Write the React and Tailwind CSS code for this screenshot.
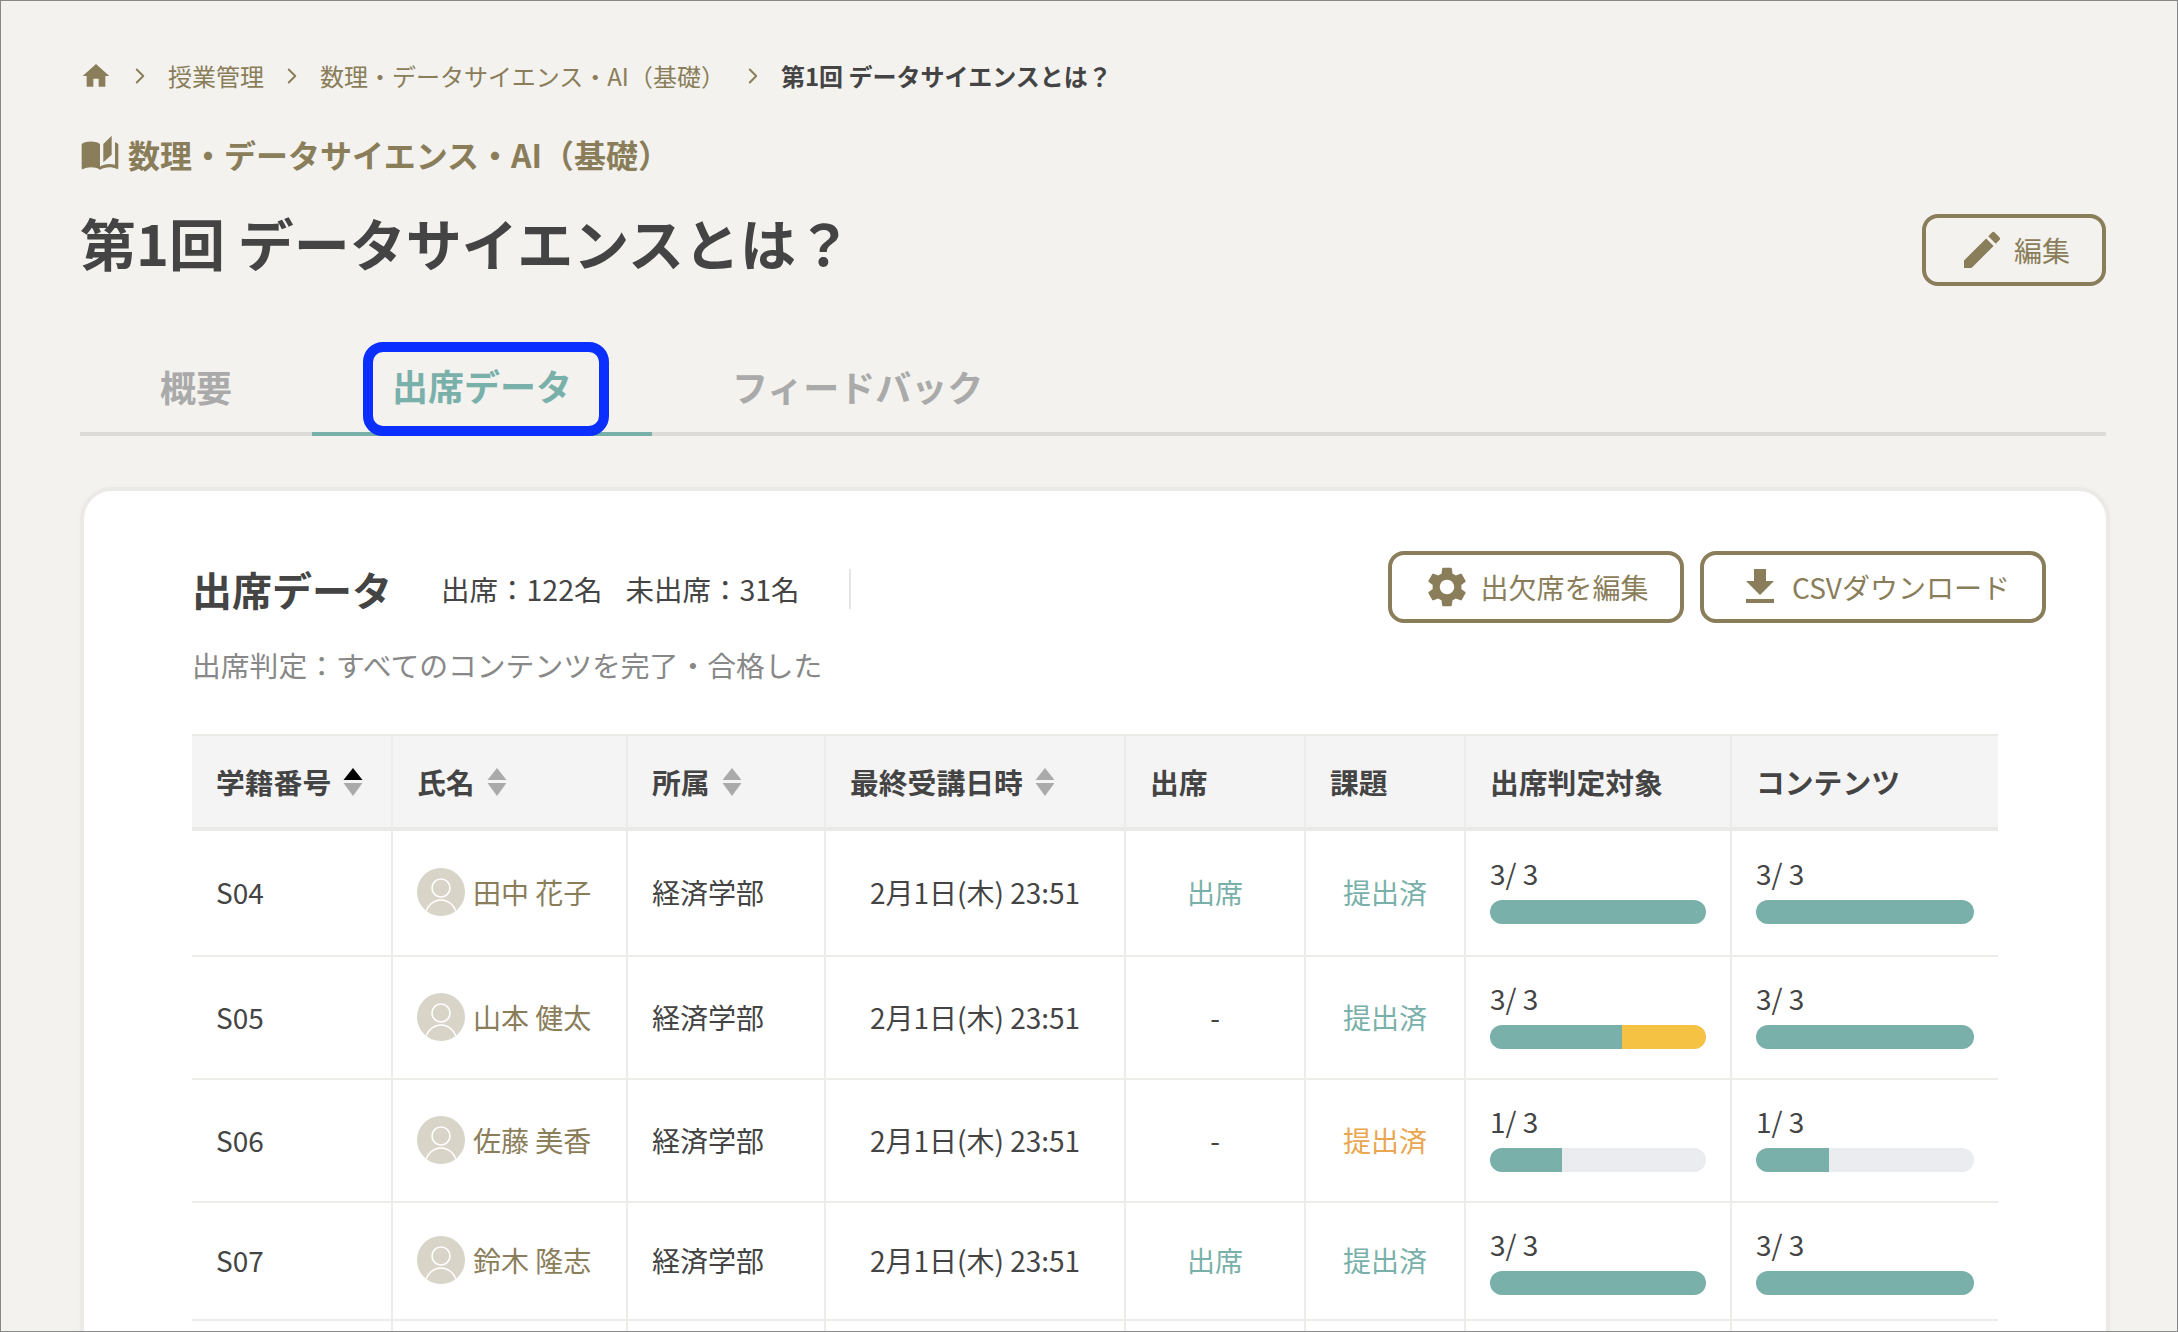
import React from "react";
import { ChevronRight } from "lucide-react";
import { MdHome, MdAutoStories, MdEdit, MdSettings, MdFileDownload } from "react-icons/md";

const rows = [
  { id: "S04", name: "田中 花子", attend: "出席", task: "提出済", late: false, h: "h-[126px]", pad: "pb-[7px]", a: ["3/ 3", 100, 0], c: ["3/ 3", 100] },
  { id: "S05", name: "山本 健太", attend: "-", task: "提出済", late: false, h: "h-[123px]", pad: "pb-[7px]", a: ["3/ 3", 61, 39], c: ["3/ 3", 100] },
  { id: "S06", name: "佐藤 美香", attend: "-", task: "提出済", late: true, h: "h-[123px]", pad: "pb-[7px]", a: ["1/ 3", 33.3, 0], c: ["1/ 3", 33.3] },
  { id: "S07", name: "鈴木 隆志", attend: "出席", task: "提出済", late: false, h: "h-[118px]", pad: "pb-[2px]", a: ["3/ 3", 100, 0], c: ["3/ 3", 100] },
];

const SortIcon = ({ active }) => (
  <svg width="20" height="30" viewBox="0 0 20 30" className="ml-[12px] shrink-0">
    <path d="M10 1 L19.5 13 H0.5 Z" fill={active ? "#000000" : "#aaaaaa"} />
    <path d="M0.5 16 H19.5 L10 29 Z" fill="#aaaaaa" />
  </svg>
);

const Avatar = () => (
  <div className="w-[48px] h-[48px] rounded-full bg-[#d9d4c8] shrink-0 overflow-hidden">
    <svg width="48" height="48" viewBox="0 0 48 48" fill="none" stroke="#ffffff" strokeWidth="1.6">
      <circle cx="24" cy="20" r="9" />
      <path d="M8 47 C10 37 17 32 24 32 C31 32 38 37 40 47" />
    </svg>
  </div>
);

const Progress = ({ data, width }) => (
  <div>
    <div className="text-[28px] leading-[36px] text-[#444444]">{data[0]}</div>
    <div className={`${width} mt-[9px] h-[24px] rounded-full bg-[#ebecf0] overflow-hidden flex`}>
      <div className="h-full bg-[#7ab0aa]" style={{ width: `${data[1]}%` }} />
      {data[2] ? <div className="h-full bg-[#f6c244]" style={{ width: `${data[2]}%` }} /> : null}
    </div>
  </div>
);

const Th = ({ children, sort, active, last }) => (
  <th className={`h-[97px] bg-[#f4f4f4] border-t-2 border-b-4 border-t-[#e9e9e5] border-b-[#e9e9e5] ${last ? "" : "border-r-2 border-r-[#ececea]"} pl-[24px] text-left font-bold text-[28.8px] text-[#444444]`}>
    <div className="flex items-center">
      {children}
      {sort && <SortIcon active={active} />}
    </div>
  </th>
);

export default function App() {
  const td = "border-b-2 border-b-[#ecece8] border-r-2 border-r-[#ececea] align-middle text-[28px]";

  return (
    <div
      className="h-[1332px] w-[2178px] overflow-hidden border border-[#888888] bg-[#f3f2ee] pt-[55px] pl-[79px] pr-[71px] text-[#444444]"
      style={{ fontFamily: '"Noto Sans CJK JP", "Noto Sans", sans-serif' }}
    >
      {/* パンくず */}
      <div className="flex items-center gap-[15px] h-[40px] text-[24px] text-[#8a7d5a]">
        <MdHome size={32} />
        <ChevronRight size={26} strokeWidth={1.8} />
        <span>授業管理</span>
        <ChevronRight size={26} strokeWidth={1.8} />
        <span>数理・データサイエンス・AI（基礎）</span>
        <ChevronRight size={26} strokeWidth={1.8} />
        <span className="font-bold text-[#444444]">第1回 データサイエンスとは？</span>
      </div>

      <div className="mt-[34px] flex items-center h-[48px] gap-[8px] text-[32px] font-bold text-[#8a7d5a]">
        <MdAutoStories size={40} />
        <span>数理・データサイエンス・AI（基礎）</span>
      </div>

      <div className="mt-[28px] flex justify-between items-start h-[80px]">
        <h1 className="text-[56px] leading-[72px] font-bold text-[#444444]">第1回 データサイエンスとは？</h1>
        <button className="mt-[8px] w-[184px] h-[72px] rounded-[16px] border-[4px] border-[#8a7d5a] flex items-center justify-center gap-[8px] text-[28px] text-[#8a7d5a]">
          <MdEdit size={48} />
          <span>編集</span>
        </button>
      </div>

      {/* タブ */}
      <div className="mt-[56px] flex border-b-4 border-[#dcdbd7] h-[94px] text-[36px] font-bold">
        <div className="h-[90px] pb-[2px] px-[80px] flex items-center text-[#aaaaaa]">概要</div>
        <div className="relative h-[94px] pb-[4px] px-[80px] flex items-center text-[#7ab0aa] border-b-4 border-[#7ab0aa]">
          出席データ
          <div className="absolute left-[51px] top-0 w-[246px] h-[94px] rounded-[20px] border-[10px] border-[#0a2fff]" />
        </div>
        <div className="h-[90px] pb-[2px] px-[80px] flex items-center text-[#aaaaaa]">フィードバック</div>
      </div>

      {/* カード */}
      <div className="mt-[51px] -mr-[4px] rounded-[32px] border-[4px] border-[#ebeae6] bg-white pt-[60px] pl-[108px] pr-[60px] h-[900px] shadow-[0_0_10px_rgba(0,0,0,0.015)]">
        <div className="flex justify-between items-center">
          <div className="flex items-center pt-[4px]">
            <h2 className="text-[40px] font-bold leading-[44px] text-[#444444]">出席データ</h2>
            <div className="ml-[49px] flex gap-[23px] text-[28.5px]">
              <span>出席：122名</span>
              <span>未出席：31名</span>
            </div>
            <div className="ml-[49px] w-[2px] h-[40px] bg-[#e5e5e5]" />
          </div>
          <div className="flex gap-[16px]">
            <button className="w-[296px] h-[72px] rounded-[16px] border-[4px] border-[#8a7d5a] flex items-center justify-center gap-[9px] text-[28px] text-[#8a7d5a]">
              <MdSettings size={48} />
              <span>出欠席を編集</span>
            </button>
            <button className="w-[346px] h-[72px] rounded-[16px] border-[4px] border-[#8a7d5a] flex items-center justify-center gap-[8px] text-[28px] text-[#8a7d5a]">
              <MdFileDownload size={48} />
              <span>CSVダウンロード</span>
            </button>
          </div>
        </div>

        <p className="mt-[22px] text-[28.8px] leading-[40px] text-[#888888]">出席判定：すべてのコンテンツを完了・合格した</p>

        <table className="mt-[49px] w-[1806px] table-fixed border-separate border-spacing-0">
          <colgroup>
            <col className="w-[201px]" />
            <col className="w-[235px]" />
            <col className="w-[198px]" />
            <col className="w-[300px]" />
            <col className="w-[180px]" />
            <col className="w-[160px]" />
            <col className="w-[266px]" />
            <col className="w-[266px]" />
          </colgroup>
          <thead>
            <tr>
              <Th sort active>学籍番号</Th>
              <Th sort>氏名</Th>
              <Th sort>所属</Th>
              <Th sort>最終受講日時</Th>
              <Th>出席</Th>
              <Th>課題</Th>
              <Th>出席判定対象</Th>
              <Th last>コンテンツ</Th>
            </tr>
          </thead>
          <tbody>
            {rows.map((r) => (
              <tr key={r.id}>
                <td className={`${td} ${r.h} pl-[24px] pb-[2px]`}>{r.id}</td>
                <td className={`${td} pl-[24px] pb-[2px]`}>
                  <div className="flex items-center gap-[8px] text-[#8a7d5a]">
                    <Avatar />
                    <span>{r.name}</span>
                  </div>
                </td>
                <td className={`${td} pl-[24px] pb-[2px]`}>経済学部</td>
                <td className={`${td} text-center pb-[2px]`}>2月1日(木) 23:51</td>
                <td className={`${td} text-center pb-[2px] ${r.attend === "出席" ? "text-[#7ab0aa]" : "text-[#444444]"}`}>{r.attend}</td>
                <td className={`${td} text-center pb-[2px] ${r.late ? "text-[#eaa650]" : "text-[#7ab0aa]"}`}>{r.task}</td>
                <td className={`${td} pl-[24px] ${r.pad}`}>
                  <Progress data={r.a} width="w-[216px]" />
                </td>
                <td className={`border-b-2 border-b-[#ecece8] align-middle pl-[24px] ${r.pad}`}>
                  <Progress data={r.c} width="w-[218px]" />
                </td>
              </tr>
            ))}
            <tr>
              <td className="h-[60px] border-r-2 border-r-[#ececea]" />
              <td className="border-r-2 border-r-[#ececea]" />
              <td className="border-r-2 border-r-[#ececea]" />
              <td className="border-r-2 border-r-[#ececea]" />
              <td className="border-r-2 border-r-[#ececea]" />
              <td className="border-r-2 border-r-[#ececea]" />
              <td className="border-r-2 border-r-[#ececea]" />
              <td />
            </tr>
          </tbody>
        </table>
      </div>
    </div>
  );
}
